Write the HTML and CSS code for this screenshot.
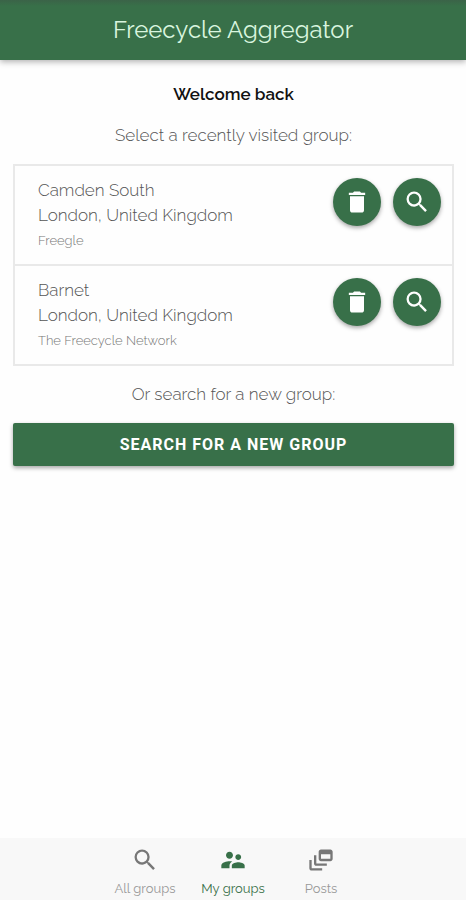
FILE: index.html
```html
<!DOCTYPE html>
<html lang="en">
<head>
<meta charset="utf-8">
<meta name="viewport" content="width=device-width, initial-scale=1">
<title>Freecycle Aggregator</title>
<link rel="stylesheet" href="styles.css">
</head>
<body>
<svg class="sprite" aria-hidden="true">
  <symbol id="search" viewBox="0 0 24 24"><path d="M15.5 14h-.79l-.28-.27A6.47 6.47 0 0 0 16 9.5 6.5 6.5 0 1 0 9.5 16c1.61 0 3.09-.59 4.23-1.57l.27.28v.79l5 4.99L20.49 19l-4.99-5zm-6 0C7.01 14 5 11.99 5 9.5S7.01 5 9.5 5 14 7.01 14 9.5 11.99 14 9.5 14z"/></symbol>
  <symbol id="trash" viewBox="0 0 24 24"><path d="M6 19c0 1.1.9 2 2 2h8c1.1 0 2-.9 2-2V7H6v12zM19 4h-3.5l-1-1h-5l-1 1H5v2h14V4z"/></symbol>
  <symbol id="people" viewBox="0 0 24 24"><path d="M16.5 12c1.38 0 2.49-1.12 2.49-2.5S17.88 7 16.5 7 14 8.12 14 9.5s1.12 2.5 2.5 2.5zM9 11c1.66 0 2.99-1.34 2.99-3S10.66 5 9 5 6 6.34 6 8s1.34 3 3 3zm7.5 3c-1.83 0-5.5.92-5.5 2.75V19h11v-2.25c0-1.83-3.67-2.75-5.5-2.75zM9 13c-2.33 0-7 1.17-7 3.5V19h7v-2.25c0-.85.33-2.34 2.37-3.47C10.5 13.1 9.66 13 9 13z"/></symbol>
  <symbol id="feed" viewBox="0 0 24 24"><path d="M8 8H6v7c0 1.1.9 2 2 2h9v-2H8V8zM20 3h-8c-1.1 0-2 .9-2 2v6c0 1.1.9 2 2 2h8c1.1 0 2-.9 2-2V5c0-1.1-.9-2-2-2zm0 8h-8V7h8v4zM4 12H2v7c0 1.1.9 2 2 2h9v-2H4v-7z"/></symbol>
</svg>
<header class="toolbar"><h1>Freecycle Aggregator</h1></header>
<main class="content">
  <h2>Welcome back</h2>
  <p class="prompt">Select a recently visited group:</p>
  <ul class="groups">
    <li class="group">
      <div class="details">
        <span>Camden South</span>
        <span>London, United Kingdom</span>
        <small>Freegle</small>
      </div>
      <div class="actions">
        <button class="round" type="button" aria-label="Remove Camden South"><svg><use href="#trash"/></svg></button>
        <button class="round" type="button" aria-label="Search Camden South"><svg><use href="#search"/></svg></button>
      </div>
    </li>
    <li class="group">
      <div class="details">
        <span>Barnet</span>
        <span>London, United Kingdom</span>
        <small>The Freecycle Network</small>
      </div>
      <div class="actions">
        <button class="round" type="button" aria-label="Remove Barnet"><svg><use href="#trash"/></svg></button>
        <button class="round" type="button" aria-label="Search Barnet"><svg><use href="#search"/></svg></button>
      </div>
    </li>
  </ul>
  <p class="prompt">Or search for a new group:</p>
  <button class="wide" type="button">SEARCH FOR A NEW GROUP</button>
</main>
<nav class="tabs">
  <a href="#all"><svg><use href="#search"/></svg><span>All groups</span></a>
  <a href="#mine" class="active" aria-current="page"><svg><use href="#people"/></svg><span>My groups</span></a>
  <a href="#posts"><svg><use href="#feed"/></svg><span>Posts</span></a>
</nav>
</body>
</html>
```
FILE: styles.css
```css
:root {
  --green: #387049;
  --line: #e9e9e9;
}

* {
  box-sizing: border-box;
}

body {
  margin: 0;
  min-height: 100vh;
  display: flex;
  flex-direction: column;
  background: #fefefe;
  color: #555;
  font: 300 17px/25px Raleway, Lato, sans-serif;
}

.sprite {
  display: none;
}

svg {
  width: 28px;
  height: 28px;
  fill: currentColor;
}

h1, h2, p, ul {
  margin: 0;
  padding: 0;
}

.toolbar {
  height: 60px;
  display: flex;
  align-items: center;
  justify-content: center;
  background: linear-gradient(#3b6348, var(--green) 6px);
  box-shadow: 0 2px 6px rgba(0, 0, 0, 0.3);
  color: #d9f5df;
}

.toolbar h1 {
  font-size: 24px;
  font-weight: 400;
  line-height: 32px;
}

.content {
  flex: 1;
  padding: 21px 12px 20px 13px;
  display: flex;
  flex-direction: column;
  gap: 16px;
}

.content h2 {
  color: #111;
  font-size: 17px;
  font-weight: 600;
  line-height: 26px;
  text-align: center;
}

.prompt {
  text-align: center;
}

.groups {
  list-style: none;
  border: 2px solid var(--line);
}

.group {
  padding: 12px 11px 11px 23px;
  display: flex;
  justify-content: space-between;
}

.group + .group {
  border-top: 2px solid var(--line);
}

.details {
  display: flex;
  flex-direction: column;
}

.details small {
  color: #777;
  font-size: 13px;
}

.actions {
  display: flex;
  align-items: flex-start;
  gap: 12px;
}

button {
  border: 0;
  background: var(--green);
  color: #fff;
  box-shadow: 0 2px 4px rgba(0, 0, 0, 0.35);
}

.round {
  width: 48px;
  height: 48px;
  padding: 0;
  display: grid;
  place-items: center;
  border-radius: 50%;
}

.wide {
  height: 43px;
  border-radius: 2px;
  font: 700 16px/24px Roboto, sans-serif;
  letter-spacing: 1px;
}

.tabs {
  height: 62px;
  padding-top: 8px;
  display: flex;
  justify-content: center;
  background: #f8f8f8;
}

.tabs a {
  width: 88px;
  display: flex;
  flex-direction: column;
  align-items: center;
  gap: 6px;
  color: #999;
  font-size: 13px;
  font-weight: 400;
  line-height: 18px;
  text-decoration: none;
}

.tabs svg {
  color: #777;
}

.tabs .active,
.tabs .active svg {
  color: var(--green);
}
```
